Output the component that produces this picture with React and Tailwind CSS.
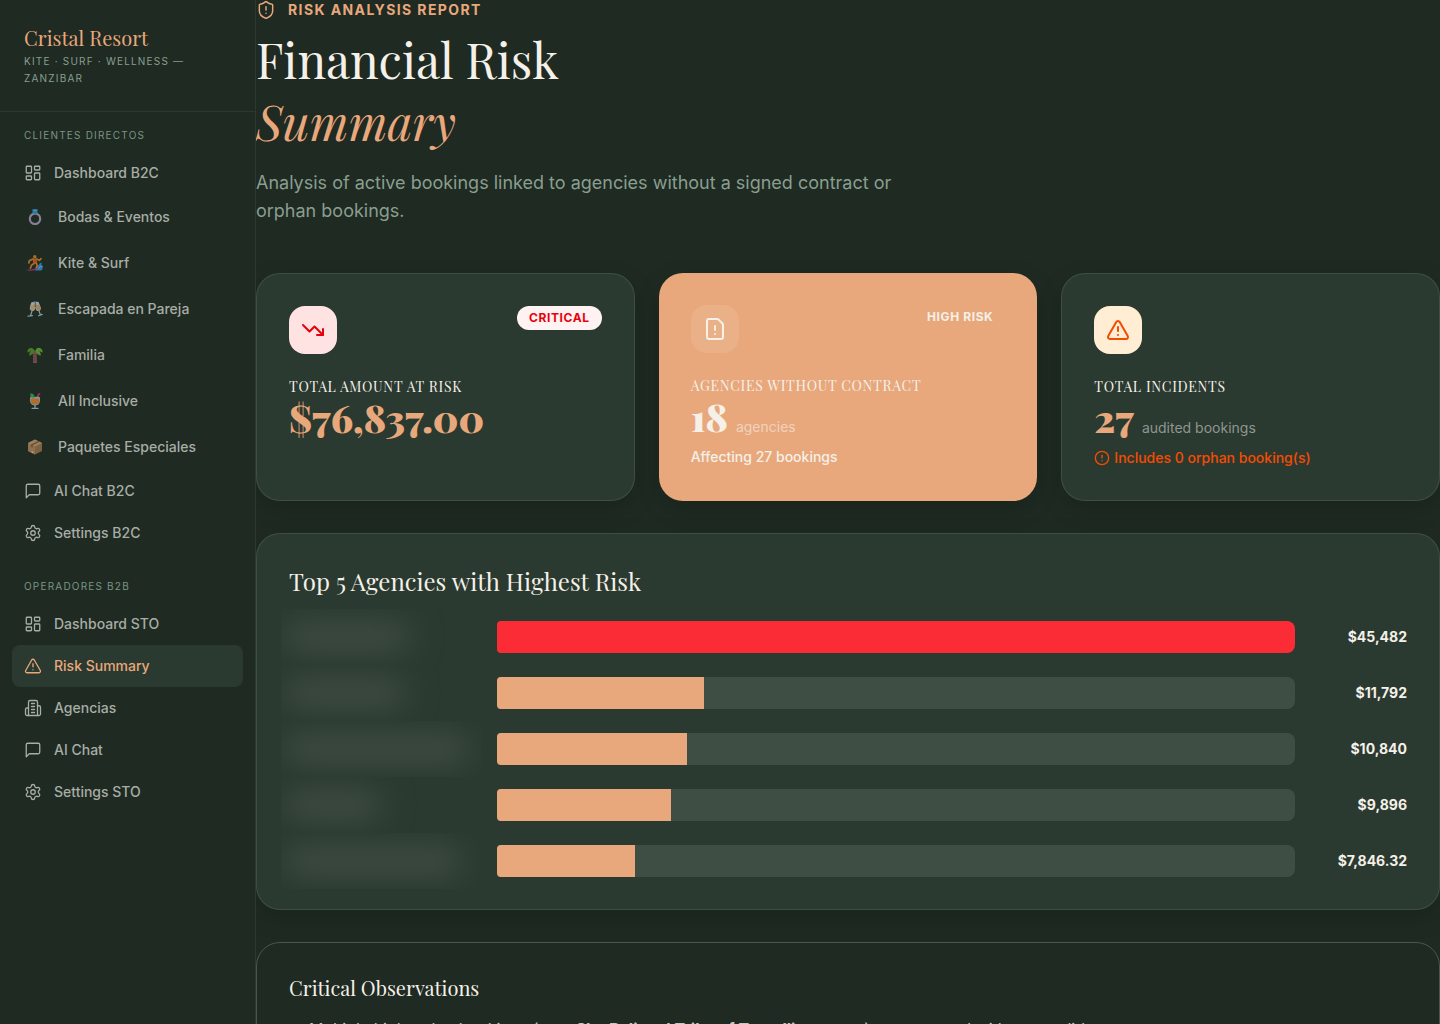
import {
  LayoutDashboard,
  Settings,
  TriangleAlert,
  ShieldAlert,
  TrendingDown,
  FileWarning,
  CircleAlert,
} from 'lucide-react';

const serif = "font-['Playfair_Display','Liberation_Serif',serif]";

const ChatIcon = () => (
  <svg
    viewBox="0 0 24 24"
    className="w-[18px] h-[18px]"
    fill="none"
    stroke="currentColor"
    strokeWidth="1.75"
    strokeLinecap="round"
    strokeLinejoin="round"
  >
    <path d="M21 15a2 2 0 0 1-2 2H7l-4 4V5a2 2 0 0 1 2-2h14a2 2 0 0 1 2 2z" />
  </svg>
);

const BuildingIcon = () => (
  <svg
    viewBox="0 0 24 24"
    className="w-[18px] h-[18px]"
    fill="none"
    stroke="currentColor"
    strokeWidth="1.75"
    strokeLinecap="round"
    strokeLinejoin="round"
  >
    <path d="M6 22V4a2 2 0 0 1 2-2h8a2 2 0 0 1 2 2v18Z" />
    <path d="M6 12H4a2 2 0 0 0-2 2v6a2 2 0 0 0 2 2h2" />
    <path d="M18 9h2a2 2 0 0 1 2 2v9a2 2 0 0 1-2 2h-2" />
    <path d="M10 6h4M10 10h4M10 14h4M10 18h4" />
  </svg>
);

const RingIcon = () => (
  <svg viewBox="0 0 16 16" className="w-4 h-4">
    <circle cx="8" cy="9.8" r="5.2" fill="none" stroke="#b5a3c4" strokeWidth="2.2" />
    <path d="M5.4 0.6h5.2v3.6L8 5 5.400 4.200z" fill="#2f9be0" />
    <path d="M5.4 0.6h5.2L8 2.6z" fill="#63bff2" />
  </svg>
);

const SurfIcon = () => (
  <svg viewBox="0 0 16 16" className="w-4 h-4">
    <path d="M8 15.4c.6-3 2.800-4 4-6 .7-1.300 2-2 3.200-1.400-1.200.6-1 1.800 0 2.200 1.200 1 .8 3.800-.8 5.200z" fill="#2f9be0" />
    <path d="M11.400 14c.6-2 1.800-2.800 3.200-2.400" fill="none" stroke="#8fd3f7" strokeWidth="1" />
    <path d="M0.500 14.600c4 .4 8-.6 10.500-2.600l1 1c-2.600 2.200-7 3-11.500 2.600z" fill="#c43a9b" />
    <circle cx="7.800" cy="1.800" r="1.700" fill="#d9922b" />
    <path d="M5.600 3.600l4-.2.6 5-4 1z" fill="#e8602b" />
    <path d="M6 4L2.400 5.600 1.800 8M9.600 4l2.800 1.400L14 3.600M6.600 8.800L4.400 10.200l-1 3M9.400 8l.8 3-1 1.600" fill="none" stroke="#e8892b" strokeWidth="1.700" strokeLinecap="round" />
  </svg>
);

const ToastIcon = () => (
  <svg viewBox="0 0 16 16" className="w-4 h-4">
    <path d="M4.200 1.400L8 .6l.4 6c0 2.400-1.400 3.600-3 3.400C3.400 9.800 2.600 8.600 2.800 6.600z" fill="#c4dbe4" />
    <path d="M3.400 4.600L8 3.600l.2 3c0 2-1.200 3-2.800 2.800C3.800 9.200 3 8.200 3.200 6.600z" fill="#e8b87c" />
    <path d="M8.200.4l3.400.6 2 5c.8 2-.2 3.600-1.600 4-1.800.4-3-.8-3.400-2.600z" fill="#c4dbe4" />
    <path d="M8.800 3.600l3.800.6 1 2.400c.4 1.600-.4 2.600-1.600 2.800-1.400.2-2.400-.8-2.800-2.200z" fill="#dca874" />
    <path d="M8.200 1v5" stroke="#1e2a22" strokeWidth="0.500" />
    <path d="M5 10l-1.400 4.400M1 15.200l4.400-.6M12 10l1.400 3.800M11.600 14.800l3.600-1.400" fill="none" stroke="#a9d3de" strokeWidth="1.200" strokeLinecap="round" />
  </svg>
);

const PalmIcon = () => (
  <svg viewBox="0 0 16 16" className="w-4 h-4">
    <path d="M6.200 5h3.400l.4 11H6z" fill="#8f5b63" />
    <path d="M6 8h4M6 10.500h4M6 13h4" stroke="#6f444c" strokeWidth="0.600" />
    <path d="M8 4.600C7 .6 2.600-.2.800 3c-.6 1-.4 2 0 2.800C2 4.600 3 4.400 4 4.600 2.400 5.600 2 7 2.400 8.800 4.400 8 6.600 7 8 4.600z" fill="#5b9a2f" />
    <path d="M8 4.600C9-.4 13.400-.2 15.200 3c.6 1 .4 2 0 2.800-1.200-1.200-2.200-1.400-3.200-1.200 1.600 1 2 2.400 1.600 4.200C11.600 8 9.400 7 8 4.600z" fill="#6fb33a" />
    <circle cx="8" cy="5.400" r="1" fill="#b5542b" />
  </svg>
);

const DrinkIcon = () => (
  <svg viewBox="0 0 16 16" className="w-4 h-4">
    <path d="M10 5.500l1.400-4 1.800-.9" fill="none" stroke="#e0395a" strokeWidth="1.600" />
    <path d="M3.400 3.800h9.200c.8 2.600.6 5-.6 7-1.400 2.200-6.600 2.200-8 0-1.200-2-1.400-4.400-.6-7z" fill="#a9c9e0" />
    <path d="M3.800 5.600h8.400c.4 2 .2 3.600-.8 5-1.200 1.600-5.600 1.600-6.800 0-1-1.400-1.200-3-.8-5z" fill="#f0872e" />
    <path d="M3.200.8c2.200-.8 4.600.6 4.200 4C5 5.400 2.800 3.600 3.200.8z" fill="#3fae5a" />
    <path d="M8 12v2.500M5 15.300h6" stroke="#a9c9e0" strokeWidth="1.300" strokeLinecap="round" />
  </svg>
);

const BoxIcon = () => (
  <svg viewBox="0 0 16 16" className="w-4 h-4">
    <path d="M1 4l7-3.400L15 4v8l-7 3.600L1 12z" fill="#a87a52" />
    <path d="M1 4l7 3.400v8.200L1 12z" fill="#c08e62" />
    <path d="M1 4l7-3.400L15 4 8 7.400z" fill="#d3a678" />
    <path d="M4 5.400l7-3.400 1.800.8-7 3.500v2.500L4 8z" fill="#8a6242" />
    <path d="M4.600 12l1.600.8v1.400l-1.600-.8z" fill="#ece4dc" />
  </svg>
);

const directLinks = [
  { label: 'Dashboard B2C', icon: LayoutDashboard },
  { label: 'Bodas & Eventos', emoji: RingIcon },
  { label: 'Kite & Surf', emoji: SurfIcon },
  { label: 'Escapada en Pareja', emoji: ToastIcon },
  { label: 'Familia', emoji: PalmIcon },
  { label: 'All Inclusive', emoji: DrinkIcon },
  { label: 'Paquetes Especiales', emoji: BoxIcon },
  { label: 'AI Chat B2C', icon: ChatIcon },
  { label: 'Settings B2C', icon: Settings },
];

const operatorLinks = [
  { label: 'Dashboard STO', icon: LayoutDashboard },
  { label: 'Risk Summary', icon: TriangleAlert, active: true },
  { label: 'Agencias', icon: BuildingIcon },
  { label: 'AI Chat', icon: ChatIcon },
  { label: 'Settings STO', icon: Settings },
];

const agencies = [
  { amount: 45482, display: '$45,482', nameWidth: 'w-[124px]' },
  { amount: 11792, display: '$11,792', nameWidth: 'w-[120px]' },
  { amount: 10840, display: '$10,840', nameWidth: 'w-[184px]' },
  { amount: 9896, display: '$9,896', nameWidth: 'w-[96px]' },
  { amount: 7846.32, display: '$7,846.32', nameWidth: 'w-[176px]' },
];

const NavLink = ({ item }) => {
  const Icon = item.icon;
  const Emoji = item.emoji;

  return (
    <li>
      <a
        href="#"
        className={`flex items-center gap-3 px-3 rounded-lg text-sm font-medium ${
          item.active ? 'bg-[#2a3a30] text-[#e8a87c]' : 'text-[#a8ada6]'
        } ${Emoji ? 'h-[46px]' : 'h-[42px]'}`}
      >
        {Icon && <Icon size={18} strokeWidth={1.75} />}
        {Emoji && (
          <span className="w-[22px] flex justify-center opacity-70">
            <Emoji />
          </span>
        )}
        {item.label}
      </a>
    </li>
  );
};

const NavSection = ({ title, links }) => (
  <section>
    <h2 className="px-3 mb-[9px] text-[10px] leading-4 tracking-[0.12em] uppercase text-[#7d9483]">
      {title}
    </h2>
    <ul>
      {links.map((item) => (
        <NavLink key={item.label} item={item} />
      ))}
    </ul>
  </section>
);

const Sidebar = () => (
  <aside className="w-64 shrink-0 border-r border-[#2a3a30]">
    <div className="p-6 border-b border-[#2a3a30]">
      <p className={`${serif} mb-0.5 text-xl leading-[27px] text-[#e8a87c]`}>Cristal Resort</p>
      <p className="text-[10px] leading-[17px] tracking-[0.12em] uppercase text-[#8a9e8f]">
        Kite · Surf · Wellness — Zanzibar
      </p>
    </div>
    <nav className="px-3 pt-[15px] space-y-6">
      <NavSection title="Clientes Directos" links={directLinks} />
      <NavSection title="Operadores B2B" links={operatorLinks} />
    </nav>
  </aside>
);

const cardLabel = `${serif} text-sm leading-5 tracking-wider uppercase`;
const cardNumber = `${serif} font-black text-[38px] leading-[42px]`;

const App = () => {
  const maxAmount = agencies[0].amount;

  return (
    <div className="flex h-screen overflow-hidden bg-[#1e2a22] font-['Inter',sans-serif] text-[#f5f0e8]">
      <Sidebar />

      <main className="flex-1 min-w-0 overflow-y-auto [scrollbar-width:none]">
        <header className="mb-12">
          <div className="flex items-center gap-3 mb-2 h-5 text-[#e8a87c]">
            <ShieldAlert size={20} strokeWidth={1.75} />
            <span className="text-sm font-bold tracking-widest uppercase">Risk Analysis Report</span>
          </div>
          <h1 className={`${serif} text-5xl leading-[62px] mb-[17px]`}>
            Financial Risk
            <br />
            <em className="text-[#e8a87c]">Summary</em>
          </h1>
          <p className="max-w-2xl text-lg leading-7 text-[#8a9e8f]">
            Analysis of active bookings linked to agencies without a signed contract or orphan bookings.
          </p>
        </header>

        <div className="grid grid-cols-3 gap-6 mb-8">
          <article className="p-8 bg-[#2a3a30] border border-white/10 rounded-3xl shadow-[0_8px_24px_rgba(0,0,0,0.15)]">
            <div className="flex justify-between items-start mb-[23px]">
              <div className="p-3 rounded-2xl bg-red-100 text-red-600">
                <TrendingDown size={24} />
              </div>
              <span className="px-3 py-1 rounded-full bg-red-50 text-xs font-bold tracking-wider text-red-600 uppercase">
                Critical
              </span>
            </div>
            <h3 className={cardLabel}>Total Amount at Risk</h3>
            <p className={`${cardNumber} text-[#e8a87c]`}>$76,837.00</p>
          </article>

          <article className="p-8 bg-[#e8a87c] rounded-3xl shadow-[0_8px_24px_rgba(0,0,0,0.15)]">
            <div className="flex justify-between items-start mb-[23px]">
              <div className="p-3 rounded-2xl bg-white/10">
                <FileWarning size={24} />
              </div>
              <span className="px-3 py-1 text-xs font-bold tracking-wider uppercase">High Risk</span>
            </div>
            <h3 className={cardLabel}>Agencies Without Contract</h3>
            <p className="flex items-baseline gap-2">
              <span className={cardNumber}>18</span>
              <span className="text-sm text-[#f5f0e8]/60">agencies</span>
            </p>
            <p className="mt-[9px] text-sm font-medium">Affecting 27 bookings</p>
          </article>

          <article className="p-8 bg-[#2a3a30] border border-white/10 rounded-3xl shadow-[0_8px_24px_rgba(0,0,0,0.15)]">
            <div className="flex justify-between items-start mb-[23px]">
              <div className="p-3 rounded-2xl bg-orange-100 text-orange-600">
                <TriangleAlert size={24} />
              </div>
            </div>
            <h3 className={cardLabel}>Total Incidents</h3>
            <p className="flex items-baseline gap-2">
              <span className={`${cardNumber} text-[#e8a87c]`}>27</span>
              <span className="text-sm text-[#8f9690]">audited bookings</span>
            </p>
            <p className="flex items-center gap-1 mt-[9px] text-sm font-medium text-orange-600">
              <CircleAlert size={16} />
              Includes 0 orphan booking(s)
            </p>
          </article>
        </div>

        <section className="p-8 mb-8 bg-[#2a3a30] border border-white/10 rounded-3xl shadow-[0_8px_24px_rgba(0,0,0,0.15)]">
          <h2 className={`${serif} text-2xl leading-[31px] mb-6`}>Top 5 Agencies with Highest Risk</h2>
          <ul className="space-y-6">
            {agencies.map((agency, index) => (
              <li key={agency.display} className="flex items-center gap-4 h-8">
                <div className="flex items-center w-[200px] h-14 -ml-2 shrink-0 overflow-hidden">
                  <span className={`h-7 ml-1 rounded-lg bg-[#424e47] blur-lg ${agency.nameWidth}`} />
                </div>
                <div className="flex-1 h-8 rounded-l rounded-r-lg bg-white/10 overflow-hidden">
                  <div
                    className={`h-full ${index === 0 ? 'bg-[#fb2c36]' : 'bg-[#e8a87c]'}`}
                    style={{ width: `${(agency.amount / maxAmount) * 100}%` }}
                  />
                </div>
                <span className="w-24 shrink-0 text-right text-sm font-bold">{agency.display}</span>
              </li>
            ))}
          </ul>
        </section>

        <section className="p-8 border border-[#4c564e] rounded-3xl">
          <h2 className={`${serif} text-xl leading-[26px] mb-4`}>Critical Observations</h2>
          <ul className="pl-5 space-y-3 list-disc text-base leading-6 text-[#c9c8c0]">
            <li>
              Multiple high-value bookings (e.g., <strong>Sky Bali and Tribe of Travelling</strong> group) are
              operated without a valid contract.
            </li>
          </ul>
        </section>
      </main>
    </div>
  );
};

export default App;
